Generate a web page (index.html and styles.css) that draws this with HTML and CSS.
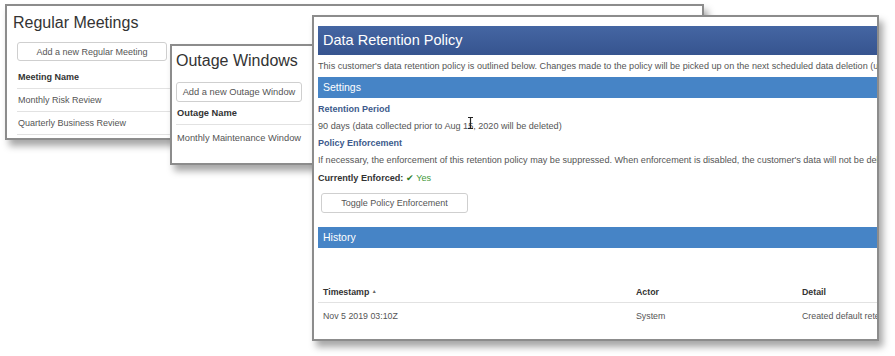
FILE: index.html
```html
<!DOCTYPE html>
<html lang="en">

<head>
    <meta charset="UTF-8">
    <title>Data Retention Policy</title>
    <link rel="stylesheet" href="styles.css">
</head>

<body>

    <!-- Regular Meetings window -->
    <div class="window win-meetings">
        <h3 class="win-title">Regular Meetings</h3>
        <div class="win-body">
            <button class="btn btn-meeting">Add a new Regular Meeting</button>
            <table class="list-table">
                <thead>
                    <tr><th>Meeting Name</th></tr>
                </thead>
                <tbody>
                    <tr><td>Monthly Risk Review</td></tr>
                    <tr><td>Quarterly Business Review</td></tr>
                </tbody>
            </table>
        </div>
    </div>

    <!-- Outage Windows window -->
    <div class="window win-outage">
        <h3 class="win-title">Outage Windows</h3>
        <div class="win-body">
            <button class="btn btn-outage">Add a new Outage Window</button>
            <table class="list-table">
                <thead>
                    <tr><th>Outage Name</th></tr>
                </thead>
                <tbody>
                    <tr><td>Monthly Maintenance Window</td></tr>
                </tbody>
            </table>
        </div>
    </div>

    <!-- Data Retention Policy window -->
    <div class="window win-policy">
        <div class="policy">
            <div class="policy-header">Data Retention Policy</div>
            <p class="policy-text first">This customer's data retention policy is outlined below. Changes made to the policy will be picked up on the next scheduled data deletion (usually within 24 hours).</p>

            <div class="section-bar">Settings</div>
            <div class="field-label">Retention Period</div>
            <p class="policy-text">90 days (data collected prior to Aug 15, 2020 will be deleted)</p>
            <div class="field-label">Policy Enforcement</div>
            <p class="policy-text">If necessary, the enforcement of this retention policy may be suppressed. When enforcement is disabled, the customer's data will not be deleted.</p>
            <p class="policy-text enforced"><b>Currently Enforced:</b> <span class="yes"><span class="check">&#10004;</span> Yes</span></p>
            <button class="btn btn-toggle">Toggle Policy Enforcement</button>

            <div class="section-bar history-bar">History</div>
            <table class="history-table">
                <thead>
                    <tr>
                        <th class="col-time">Timestamp <span class="sort">&#9650;</span></th>
                        <th class="col-actor">Actor</th>
                        <th>Detail</th>
                    </tr>
                </thead>
                <tbody>
                    <tr>
                        <td>Nov 5 2019 03:10Z</td>
                        <td>System</td>
                        <td>Created default retention policy</td>
                    </tr>
                </tbody>
            </table>
        </div>

        <!-- text cursor -->
        <svg class="cursor" width="7" height="12" viewBox="0 0 7 12">
            <path d="M1 0.5h5M3.5 0.5v11M1 11.5h5" stroke="#222" stroke-width="1.2" fill="none" />
        </svg>
    </div>

</body>

</html>
```

FILE: styles.css
```css
/* General Styles */
html,
body {
    margin: 0;
    height: 100%;
    background-color: #ffffff;
    font-family: "Liberation Sans", Arial, sans-serif;
    color: #555;
    overflow: hidden;
}

/* Screenshot windows laid on the canvas */
.window {
    position: absolute;
    background: #ffffff;
    border: 2px solid #8c8c8c;
    box-sizing: border-box;
    overflow: hidden;
    box-shadow: 4px 6px 7px rgba(0, 0, 0, 0.35);
}

.win-meetings {
    left: 5px;
    top: 4px;
    width: 699px;
    height: 136px;
}

.win-outage {
    left: 170px;
    top: 44px;
    width: 170px;
    height: 121px;
}

.win-policy {
    left: 312px;
    top: 15px;
    width: 567px;
    height: 326px;
}

.win-title {
    margin: 0;
    font-weight: normal;
    color: #333;
    font-size: 16px;
    line-height: 20px;
}

.win-meetings .win-title {
    margin: 7px 0 0 6px;
}

.win-meetings .win-body {
    padding: 9px 0 0 10px;
}

.win-outage .win-title {
    margin: 5px 0 0 4px;
}

.win-outage .win-body {
    padding: 11px 0 0 4px;
}

.btn {
    display: block;
    background: #ffffff;
    border: 1px solid #cfcfcf;
    border-radius: 3px;
    color: #555;
    font-family: inherit;
    padding: 0;
    box-sizing: border-box;
}

.btn-meeting {
    width: 150px;
    height: 19px;
    font-size: 9px;
}

.btn-outage {
    width: 126px;
    height: 20px;
    font-size: 9.3px;
}

.list-table {
    border-collapse: collapse;
    width: 700px;
    font-size: 9.3px;
}

.win-meetings .list-table {
    margin-top: 5px;
    font-size: 9px;
}

.list-table th {
    text-align: left;
    color: #333;
    height: 22px;
    padding: 0 1px;
    border-bottom: 1px solid #e2e2e2;
}

.list-table td {
    height: 22px;
    padding: 0 1px;
    border-bottom: 1px solid #e2e2e2;
}

.win-outage .list-table td {
    height: 26px;
    border-bottom: none;
}

/* Data retention policy */
.policy {
    width: 900px;
    padding: 9px 0 0 4px;
}

.policy-header {
    background: linear-gradient(#4566a3, #36548f);
    color: #ffffff;
    font-size: 14.5px;
    height: 29px;
    line-height: 29px;
    padding-left: 5px;
}

.policy-text {
    margin: 5px 0 0;
    font-size: 9.1px;
    line-height: 12px;
    white-space: nowrap;
}

.policy-text.enforced {
    margin-top: 6px;
    color: #333;
}

.yes {
    color: #3f9a3a;
}

.check {
    color: #2f7d2a;
}

.section-bar {
    margin-top: 5px;
    background: #4684c6;
    color: #ffffff;
    font-size: 10.5px;
    height: 21px;
    line-height: 21px;
    padding-left: 5px;
}

.field-label {
    margin-top: 5px;
    font-size: 9px;
    line-height: 12px;
    font-weight: bold;
    color: #3d5a8c;
}

.btn-toggle {
    margin: 9px 0 0 3px;
    width: 147px;
    height: 20px;
    font-size: 9px;
}

.history-bar {
    margin-top: 14px;
}

.history-table {
    margin-top: 34px;
    border-collapse: collapse;
    width: 900px;
    font-size: 8.8px;
    white-space: nowrap;
}

.history-table th {
    text-align: left;
    color: #333;
    height: 20px;
    padding: 0 5px;
    border-bottom: 1px solid #e2e2e2;
}

.history-table td {
    height: 26px;
    padding: 0 5px;
}

.col-time {
    width: 303px;
}

.col-actor {
    width: 156px;
}

.sort {
    font-size: 5px;
    color: #666;
    vertical-align: 2px;
}

.cursor {
    position: absolute;
    left: 153px;
    top: 100px;
}
```
